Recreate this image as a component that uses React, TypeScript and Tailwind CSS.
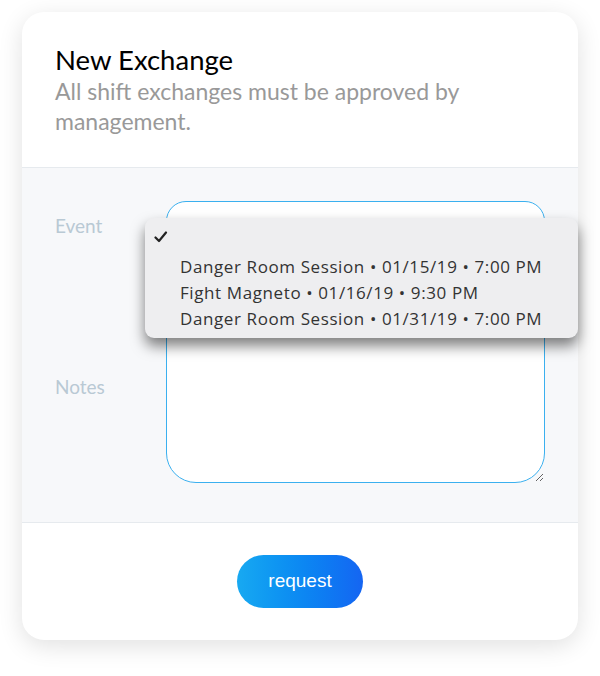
import React from "react";

const events = [
  "Danger Room Session • 01/15/19 • 7:00 PM",
  "Fight Magneto • 01/16/19 • 9:30 PM",
  "Danger Room Session • 01/31/19 • 7:00 PM",
];

const App = () => {
  return (
    <div className="w-[600px] h-[676px] bg-white pt-[12px] px-[22px]">
      <div className="relative w-[556px] h-[628px] bg-white rounded-[22px] shadow-[0_6px_24px_rgba(0,0,0,0.12)] flex flex-col">
        {/* Header */}
        <div className="h-[156px] px-[33px] pt-[31px] border-b border-[#e6eaee] rounded-t-[22px]">
          <h1 className="text-[27.5px] leading-[33px] text-black font-['Lato',sans-serif]">
            New Exchange
          </h1>
          <p className="text-[23px] leading-[30px] text-[#999999] font-['Lato',sans-serif] w-[450px]">
            All shift exchanges must be approved by management.
          </p>
        </div>

        {/* Form */}
        <div className="h-[355px] bg-[#f7f8fa] border-b border-[#e6eaee] px-[33px] pt-[33px]">
          <div className="grid grid-cols-[111px_1fr] gap-y-[40px] items-center">
            <label className="text-[19px] text-[#b9c9d4] font-['Lato',sans-serif]">
              Event
            </label>
            <div className="h-[50px] bg-white border-[1.5px] border-[#3bb0ef] rounded-[20px]" />
            <label className="text-[19px] text-[#b9c9d4] font-['Lato',sans-serif]">
              Notes
            </label>
            <textarea className="h-[192px] bg-white border-[1.5px] border-[#3bb0ef] rounded-[30px] outline-none" />
          </div>
        </div>

        {/* Footer */}
        <div className="flex-1 flex items-center justify-center rounded-b-[22px]">
          <button className="w-[126px] h-[53px] rounded-full bg-gradient-to-r from-[#18a9f1] to-[#1565f2] text-white text-[19px] font-['Liberation_Sans',sans-serif]">
            request
          </button>
        </div>

        {/* Open select menu */}
        <div className="absolute left-[123px] top-[206px] w-[433px] h-[120px] bg-[#eeeef0] rounded-[9px] shadow-[0_8px_14px_rgba(0,0,0,0.5)] pt-[13px] font-['Open_Sans',sans-serif] text-[#333333]">
          <svg width="14" height="12" viewBox="0 0 14 12" className="ml-[9px]">
            <path d="M1.5 6.5 L5 10 L12 1.5" fill="none" stroke="#222" strokeWidth="2.2" strokeLinecap="round" strokeLinejoin="round" />
          </svg>
          <div className="pt-[11px] pl-[35px]">
            {events.map((e) => (
              <div key={e} className="text-[17px] leading-[26px] tracking-[0.6px]">
                {e}
              </div>
            ))}
          </div>
        </div>
      </div>
    </div>
  );
};

export default App;
